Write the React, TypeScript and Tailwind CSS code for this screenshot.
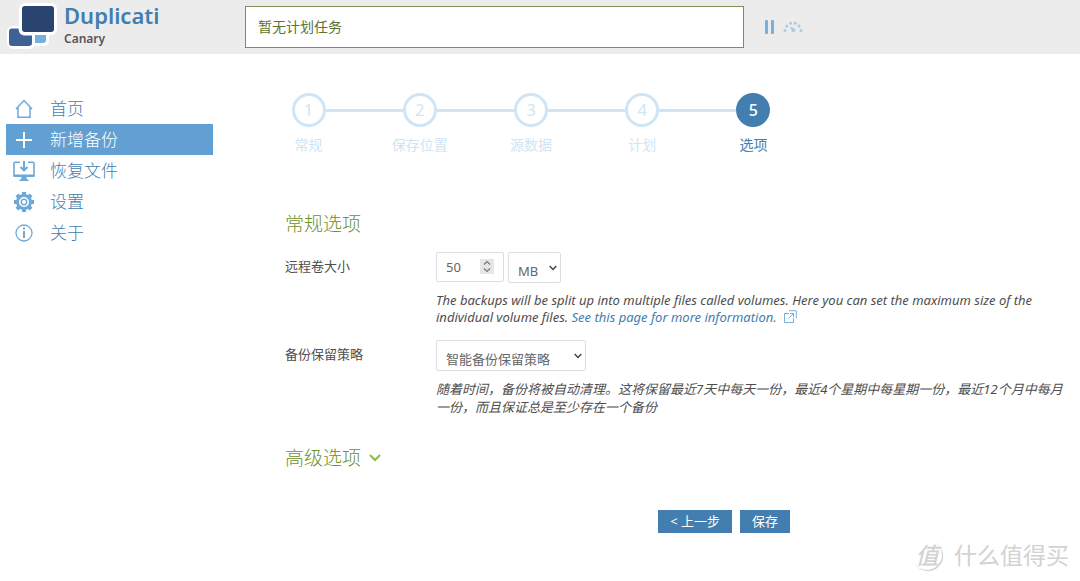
import type { ReactNode } from 'react'

const menu = [
  { label: '首页', icon: 'home', active: false },
  { label: '新增备份', icon: 'add', active: true },
  { label: '恢复文件', icon: 'restore', active: false },
  { label: '设置', icon: 'settings', active: false },
  { label: '关于', icon: 'about', active: false },
]

const steps = ['常规', '保存位置', '源数据', '计划', '选项']

function Logo() {
  return (
    <svg width="50" height="48" viewBox="0 0 50 48" aria-hidden="true">
      <g fill="#fff">
        <rect x="25" y="26" width="17" height="18" rx="5" />
        <rect x="0" y="24" width="28" height="23" rx="6" />
        <rect x="12" y="1" width="38" height="32" rx="6" />
      </g>
      <path d="M28 33h11v5a3 3 0 0 1-3 3h-8Z" fill="#77b0dd" />
      <path d="M5 26.500h6.500c.5 5 2.500 7 7 7H25v7.500a3 3 0 0 1-3 3H5a3 3 0 0 1-3-3V29.500a3 3 0 0 1 3-3Z" fill="#3f6294" />
      <rect x="15" y="4" width="32" height="26" rx="3" fill="#28446f" />
    </svg>
  )
}

function GaugeIcon() {
  return (
    <svg width="20" height="14" viewBox="0 0 20 14" fill="#a9cbe6" aria-hidden="true">
      <circle cx="2" cy="10.500" r="1.500" />
      <circle cx="3.800" cy="6" r="1.500" />
      <circle cx="7.500" cy="3.200" r="1.500" />
      <circle cx="12.300" cy="3.200" r="1.500" />
      <circle cx="16" cy="6" r="1.500" />
      <circle cx="18" cy="10.500" r="1.500" />
      <path d="M7 6.500 11 8.200a2 2 0 1 1-2.200 3Z" />
    </svg>
  )
}

function MenuIcon({ name }: { name: string }) {
  return (
    <svg width="22" height="22" viewBox="0 0 22 22" fill="none" stroke="currentColor" aria-hidden="true">
      {name === 'home' && <path d="M3 11 11 2.500l8 8.500M5 9.500v9.700h12V9.500" strokeWidth="1.500" />}
      {name === 'add' && <path d="M11 3v16M3 11h16" strokeWidth="2" />}
      {name === 'restore' && (
        <>
          <path d="M7 2.200H2a1 1 0 0 0-1 1V16h20V3.200a1 1 0 0 0-1-1h-5" strokeWidth="1.600" />
          <path d="M1 14.500h20V16a1 1 0 0 1-1 1H2a1 1 0 0 1-1-1ZM8.500 17h5l.5 2.500h1.500V21h-9v-1.500H8Z" fill="currentColor" stroke="none" />
          <path d="M11 1v9M7.500 7 11 10.300 14.500 7" strokeWidth="2" />
        </>
      )}
      {name === 'settings' && (
        <>
          <circle cx="11" cy="11" r="6.500" strokeWidth="3" />
          <circle cx="11" cy="11" r="2.700" strokeWidth="1.400" />
          <path d="M11 1v3M11 18v3M1 11h3M18 11h3M3.900 3.900 6 6M16 16l2.100 2.100M18.100 3.900 16 6M6 16l-2.100 2.100" strokeWidth="4" />
        </>
      )}
      {name === 'about' && (
        <>
          <circle cx="11" cy="11" r="8" strokeWidth="1.300" />
          <path d="M11 9v7" strokeWidth="2" />
          <path d="M11 5.500v2" strokeWidth="2" />
        </>
      )}
    </svg>
  )
}

function SelectBox({ id, label, value, className }: { id: string; label: string; value: string; className: string }) {
  return (
    <div className={`grid items-center ${className}`}>
      <select
        id={id}
        aria-label={label}
        className="col-start-1 row-start-1 h-[31px] w-full appearance-none rounded-[2px] border border-[#dedede] bg-white pt-1.5 pl-[9px] text-[13px] leading-5 text-[#666]"
      >
        <option>{value}</option>
      </select>
      <svg className="pointer-events-none col-start-1 row-start-1 mr-1 justify-self-end" width="8" height="6" viewBox="0 0 8 6" fill="none" stroke="#444" strokeWidth="1.500" aria-hidden="true">
        <path d="M.7 1 4 4.400 7.300 1" />
      </svg>
    </div>
  )
}

function Field({ label, htmlFor, children }: { label: string; htmlFor: string; children: ReactNode }) {
  return (
    <div className="flex items-start">
      <label htmlFor={htmlFor} className="w-[151px] shrink-0 pt-1 text-[13px] leading-5">
        {label}
      </label>
      <div className="min-w-0 flex-1">{children}</div>
    </div>
  )
}

export default function App() {
  return (
    <div className="min-h-screen bg-white font-['Noto_Sans','Noto_Sans_CJK_SC',sans-serif] text-[#4e4e4e]">
      <header className="flex h-[54px] items-start bg-[#ececec] pl-[7px]">
        <a href="#home" className="flex w-[238px] shrink-0 items-start gap-[7px]">
          <span className="pt-0.5">
            <Logo />
          </span>
          <span className="flex flex-col">
            <span className="text-[22px] leading-[30px] font-semibold text-[#427eaf]">Duplicati</span>
            <span className="text-[12px] leading-[17px] font-semibold text-[#555]">Canary</span>
          </span>
        </a>
        <div className="mt-1.5 flex h-[42px] w-[499px] items-center border border-[#7b9152] bg-white px-3 text-[14px] leading-5 text-[#5c7331]">
          暂无计划任务
        </div>
        <div className="mt-5 flex items-center gap-2 pl-[21px]">
          <button type="button" aria-label="暂停">
            <svg width="10" height="14" viewBox="0 0 10 14" fill="#77b0dd" aria-hidden="true">
              <rect width="3" height="14" rx="1" />
              <rect x="6" width="3" height="14" rx="1" />
            </svg>
          </button>
          <button type="button" aria-label="限速">
            <GaugeIcon />
          </button>
        </div>
      </header>

      <div className="flex pt-[39px] pr-4 pl-1.5">
        <nav className="w-[207px] shrink-0">
          <ul>
            {menu.map((m) => (
              <li key={m.label}>
                <a
                  href={`#${m.icon}`}
                  className={`flex h-[31px] items-center gap-[15px] pl-[7px] text-[17px] leading-7 font-light ${m.active ? 'bg-[#629fd3] text-white' : 'text-[#427eaf]'}`}
                >
                  <span className={m.active ? 'text-white' : 'text-[#6ca9d9]'}>
                    <MenuIcon name={m.icon} />
                  </span>
                  {m.label}
                </a>
              </li>
            ))}
          </ul>
        </nav>

        <main className="ml-10 min-w-0 flex-1">
          <ol className="grid max-w-[556px] grid-cols-5">
            {steps.map((s, i) => {
              const current = i === 4
              return (
                <li key={s} className={`flex flex-col items-center gap-2 ${current ? 'text-[#427eaf]' : 'text-[#cfe5f5]'}`}>
                  <div className="flex w-full items-center">
                    <span className={`h-[3px] flex-1 ${i === 0 ? '' : 'bg-[#cfe5f5]'}`} />
                    <span
                      className={`flex size-[34px] items-center justify-center rounded-full text-[16px] ${current ? 'bg-[#427eaf] font-medium text-white' : 'border-3 border-[#cfe5f5]'}`}
                    >
                      {i + 1}
                    </span>
                    <span className={`h-[3px] flex-1 ${current ? '' : 'bg-[#cfe5f5]'}`} />
                  </div>
                  <span className="text-[14px] leading-5">{s}</span>
                </li>
              )
            })}
          </ol>

          <form className="pt-[55px] pl-8">
            <h2 className="text-[19px] leading-7 font-light text-[#6f9128]">常规选项</h2>

            <div className="pt-3.5">
              <Field label="远程卷大小" htmlFor="size">
                <div className="flex gap-1">
                  <div className="grid w-[68px] items-start">
                    <input
                      id="size"
                      type="number"
                      defaultValue={50}
                      className="col-start-1 row-start-1 h-[30px] w-full appearance-none rounded-[2px] border border-[#dedede] pl-[9px] text-[13px] text-[#666] [&::-webkit-inner-spin-button]:appearance-none"
                    />
                    <svg className="pointer-events-none col-start-1 row-start-1 mt-[7px] mr-2.5 justify-self-end" width="14" height="15" viewBox="0 0 14 15" fill="none" stroke="#777" strokeWidth="1.200" aria-hidden="true">
                      <rect width="14" height="15" fill="#e6e6e8" stroke="none" />
                      <path d="m4 5.500 3-3 3 3M4 9.500l3 3 3-3" />
                    </svg>
                  </div>
                  <SelectBox id="unit" label="单位" value="MB" className="w-[53px]" />
                </div>
                <p className="pt-[9px] text-[13px] leading-[17px] italic">
                  The backups will be split up into multiple files called volumes. Here you can set the maximum size of the individual volume files.{' '}
                  <a href="#volumes" className="text-[#427eaf]">
                    See this page for more information.
                    <svg className="ml-1.5 inline align-[-2px]" width="14" height="14" viewBox="0 0 14 14" fill="none" stroke="#77b0dd" aria-hidden="true">
                      <path d="M6 3.500H1.500v9h9V8M5.500 8.500l5-5M7 3.500h3.500V7M6 .7h7.300V8" />
                    </svg>
                  </a>
                </p>
              </Field>
            </div>

            <div className="pt-3.5">
              <Field label="备份保留策略" htmlFor="retention">
                <SelectBox id="retention" label="备份保留策略" value="智能备份保留策略" className="w-[150px]" />
                <p className="pt-[9px] text-[13px] leading-[18px] italic">
                  随着时间，备份将被自动清理。这将保留最近7天中每天一份，最近4个星期中每星期一份，最近12个月中每月一份，而且保证总是至少存在一个备份
                </p>
              </Field>
            </div>

            <h2 className="pt-7 text-[19px] leading-7 font-light text-[#6f9128]">
              <button type="button" className="flex items-center gap-2">
                高级选项
                <svg width="12" height="8" viewBox="0 0 12 8" fill="none" stroke="#8cbf3f" strokeWidth="2" aria-hidden="true">
                  <path d="m1 1 5 5 5-5" />
                </svg>
              </button>
            </h2>

            <div className="flex max-w-[505px] justify-end gap-2 pt-[38px] text-[13px] leading-[23px] text-white">
              <button type="button" className="bg-[#427eaf] px-3">&lt; 上一步</button>
              <button type="submit" className="bg-[#427eaf] px-3">保存</button>
            </div>
          </form>
        </main>
      </div>

      <div className="pointer-events-none absolute right-[11px] bottom-2.5 flex items-center gap-3 text-[#d2d2d2]">
        <span className="flex size-[30px] items-center justify-center rounded-full text-[23px] leading-none font-medium italic shadow-[1px_1px_1px_#c8c8c8]">值</span>
        <span className="text-[23px] leading-8">什么值得买</span>
      </div>
    </div>
  )
}
